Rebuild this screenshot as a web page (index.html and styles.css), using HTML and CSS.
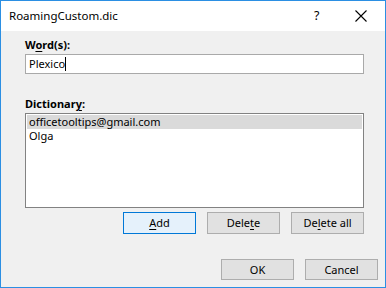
FILE: index.html
```html
<!DOCTYPE html>
<html>
<head>
<meta charset="utf-8">
<link rel="stylesheet" href="styles.css">
</head>
<body>
<div class="window">
  <div class="titlebar">
    <span class="title">RoamingCustom.dic</span>
    <span class="help">?</span>
    <span class="close"><svg width="12" height="12" viewBox="0 0 12 12"><path d="M0.5 0.5 L11.5 11.5 M11.5 0.5 L0.5 11.5" stroke="#000" stroke-width="1.1" fill="none"/></svg></span>
  </div>
  <div class="content">
    <div class="label lab-word">W<u>o</u>rd(s):</div>
    <div class="input"><span>Plexico</span><span class="caret"></span></div>
    <div class="label lab-dict">Dictionar<u>y</u>:</div>
    <div class="list">
      <div class="item selected">officetooltips@gmail.com</div>
      <div class="item">Olga</div>
    </div>
    <div class="row row-edit">
      <div class="btn default"><u>A</u>dd</div>
      <div class="btn">Dele<u>t</u>e</div>
      <div class="btn">De<u>l</u>ete all</div>
    </div>
    <div class="row row-ok">
      <div class="btn">OK</div>
      <div class="btn">Cancel</div>
    </div>
  </div>
</div>
</body>
</html>
```
FILE: styles.css
```css
html, body { margin: 0; padding: 0; }
body { width: 386px; height: 288px; overflow: hidden; font-family: "Noto Sans", "Open Sans", sans-serif; font-size: 11px; color: #000; }
.window { width: 386px; height: 288px; box-sizing: border-box; border: 1px solid #2b8fe3; background: #f0f0f0; display: flex; flex-direction: column; }
.titlebar { height: 30px; background: #fff; display: flex; align-items: center; flex-shrink: 0; }
.title { margin-left: 8px; font-size: 11.5px; flex: 1; line-height: 16px; padding-bottom: 1px; }
.help { width: 14px; margin-right: 27px; font-size: 12.5px; line-height: 16px; }
.close { width: 12px; height: 12px; margin-right: 18px; display: flex; }
.content { display: flex; flex-direction: column; padding: 0 21px 0 24px; }
.label { line-height: 16px; font-weight: bold; }
.lab-word { margin-top: 6px; }
.lab-dict { margin-top: 22px; }
.input { margin-top: 1px; height: 20px; box-sizing: border-box; border: 1px solid #a9a9a9; background: #fff; display: flex; align-items: center; padding-left: 3px; line-height: 16px; }
.caret { width: 1px; height: 14px; background: #000; }
.list { margin-top: 1px; height: 95px; box-sizing: border-box; border: 1px solid #828282; background: #fff; padding: 1px 0 0 1px; }
.item { height: 14px; line-height: 14px; padding-left: 2px; margin-right: 1px; }
.item.selected { background: #dadada; }
.row { display: flex; justify-content: flex-end; gap: 11px; }
.row-edit { margin-top: 4px; }
.row-ok { margin-top: 25px; margin-right: -14px; }
.btn { width: 73px; height: 21px; box-sizing: border-box; border: 1px solid #adadad; background: #e1e1e1; display: flex; align-items: center; justify-content: center; line-height: 16px; }
.row-edit .btn { height: 22px; }
.btn.default { border-color: #0078d7; background: #e5f1fb; }
u { text-decoration: underline; text-underline-offset: 2px; }
```
